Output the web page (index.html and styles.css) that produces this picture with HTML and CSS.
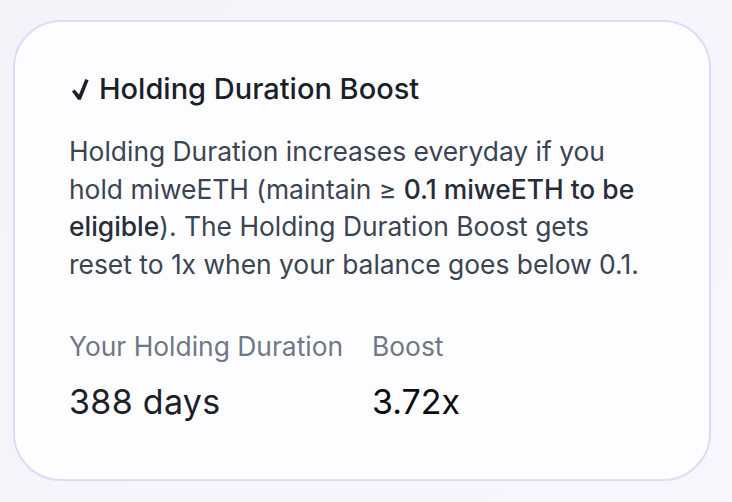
FILE: index.html
```html
<!DOCTYPE html>
<html>
<head>
<meta charset="utf-8">
<link rel="stylesheet" href="styles.css">
</head>
<body>
<div class="card">
  <h2 class="title"><svg class="check" width="17" height="21" viewBox="0 0 17 21"><polygon points="0,12.4 2.6,10.4 7,15.6 13.3,0 16.6,1.3 8.9,20.8 6,20.8" fill="#1b1f2a"/></svg><span>Holding Duration Boost</span></h2>
  <p class="desc">Holding Duration increases everyday if you hold miweETH (maintain ≥ <strong>0.1 miweETH to be eligible</strong>). The Holding Duration Boost gets reset to 1x when your balance goes below 0.1.</p>
  <div class="stats">
    <div class="stat">
      <div class="label">Your Holding Duration</div>
      <div class="value">388 days</div>
    </div>
    <div class="stat">
      <div class="label">Boost</div>
      <div class="value boost">3.72x</div>
    </div>
  </div>
</div>
</body>
</html>
```
FILE: styles.css
```css
html, body {
  margin: 0;
  height: 100%;
}
body {
  background: linear-gradient(135deg, #f3f3fa 0%, #f6f6fd 100%);
  font-family: Inter, "Noto Sans", sans-serif;
  padding: 20px 21px 21px 13px;
  box-sizing: border-box;
}
.card {
  box-sizing: border-box;
  width: 698px;
  height: 461px;
  background: #fdfdff;
  border: 2px solid #dcdcf8;
  border-radius: 48px;
  padding: 47px 40px 0 54px;
}
.title {
  margin: 0;
  display: flex;
  align-items: center;
  gap: 10px;
  font-size: 29px;
  font-weight: 500;
  color: #1b1f2a;
  line-height: 40px;
}
.check {
  margin-left: 3px;
  flex: none;
}
.desc {
  margin: 24px 0 0;
  font-size: 26.4px;
  line-height: 37.5px;
  color: #3b4452;
  width: 576px;
}
.desc strong {
  font-weight: 500;
  color: #262c38;
}
.stats {
  display: grid;
  grid-template-columns: 303px auto;
  margin-top: 47px;
}
.label {
  font-size: 26.4px;
  color: #6f7886;
  line-height: 32px;
}
.value {
  margin-top: 20px;
  font-size: 34px;
  letter-spacing: 0.3px;
  color: #1b1f2a;
  line-height: 40px;
}
.value.boost {
  letter-spacing: 0;
  color: #0b0d12;
}
```
